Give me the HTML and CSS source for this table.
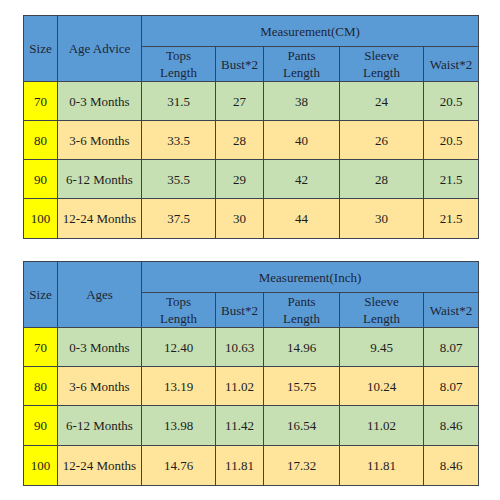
FILE: index.html
```html
<!DOCTYPE html>
<html>
<head>
<meta charset="utf-8">
<link rel="stylesheet" href="styles.css">
</head>
<body>
<div class="page">
<table class="chart">
  <colgroup>
    <col class="c-size"><col class="c-age"><col class="c-tops"><col class="c-bust"><col class="c-pants"><col class="c-sleeve"><col class="c-waist">
  </colgroup>
  <tr class="h1">
    <th rowspan="2">Size</th>
    <th rowspan="2">Age Advice</th>
    <th colspan="5">Measurement(CM)</th>
  </tr>
  <tr class="h2">
    <th>Tops<br>Length</th><th>Bust*2</th><th>Pants<br>Length</th><th>Sleeve<br>Length</th><th>Waist*2</th>
  </tr>
  <tr class="green r39"><td class="size">70</td><td>0-3 Months</td><td>31.5</td><td>27</td><td>38</td><td>24</td><td>20.5</td></tr>
  <tr class="orange r39"><td class="size">80</td><td>3-6 Months</td><td>33.5</td><td>28</td><td>40</td><td>26</td><td>20.5</td></tr>
  <tr class="green r39"><td class="size">90</td><td>6-12 Months</td><td>35.5</td><td>29</td><td>42</td><td>28</td><td>21.5</td></tr>
  <tr class="orange r40"><td class="size">100</td><td>12-24 Months</td><td>37.5</td><td>30</td><td>44</td><td>30</td><td>21.5</td></tr>
</table>

<table class="chart">
  <colgroup>
    <col class="c-size"><col class="c-age"><col class="c-tops"><col class="c-bust"><col class="c-pants"><col class="c-sleeve"><col class="c-waist">
  </colgroup>
  <tr class="h1">
    <th rowspan="2">Size</th>
    <th rowspan="2">Ages</th>
    <th colspan="5">Measurement(Inch)</th>
  </tr>
  <tr class="h2">
    <th>Tops<br>Length</th><th>Bust*2</th><th>Pants<br>Length</th><th>Sleeve<br>Length</th><th>Waist*2</th>
  </tr>
  <tr class="green r39"><td class="size">70</td><td>0-3 Months</td><td>12.40</td><td>10.63</td><td>14.96</td><td>9.45</td><td>8.07</td></tr>
  <tr class="orange r39"><td class="size">80</td><td>3-6 Months</td><td>13.19</td><td>11.02</td><td>15.75</td><td>10.24</td><td>8.07</td></tr>
  <tr class="green r40"><td class="size">90</td><td>6-12 Months</td><td>13.98</td><td>11.42</td><td>16.54</td><td>11.02</td><td>8.46</td></tr>
  <tr class="orange r40"><td class="size">100</td><td>12-24 Months</td><td>14.76</td><td>11.81</td><td>17.32</td><td>11.81</td><td>8.46</td></tr>
</table>
</div>
</body>
</html>
```

FILE: styles.css
```css
html, body {
  margin: 0;
  padding: 0;
  background: #ffffff;
}
.page {
  padding: 15px 0 0 23px;
  display: flex;
  flex-direction: column;
  gap: 22px;
  font-family: "Liberation Serif", "Times New Roman", serif;
  font-size: 13px;
  color: #1c1c1c;
}
.chart {
  border-collapse: collapse;
  table-layout: fixed;
  width: 455px;
}
.c-size { width: 34px; }
.c-age { width: 84px; }
.c-tops { width: 74px; }
.c-bust { width: 48px; }
.c-pants { width: 76px; }
.c-sleeve { width: 84px; }
.c-waist { width: 55px; }
.chart th, .chart td {
  border: 1px solid #3d4450;
  padding: 0;
  text-align: center;
  vertical-align: middle;
  font-weight: normal;
  line-height: 17px;
}
.chart th {
  background: #5b9bd5;
  color: #1b2636;
}
.h1 { height: 31px; }
.h2 { height: 35px; }
.r39 { height: 39px; }
.r40 { height: 40px; }
.green td { background: #c6e0b4; }
.orange td { background: #ffe59b; }
.chart td.size { background: #ffff00; }
```
